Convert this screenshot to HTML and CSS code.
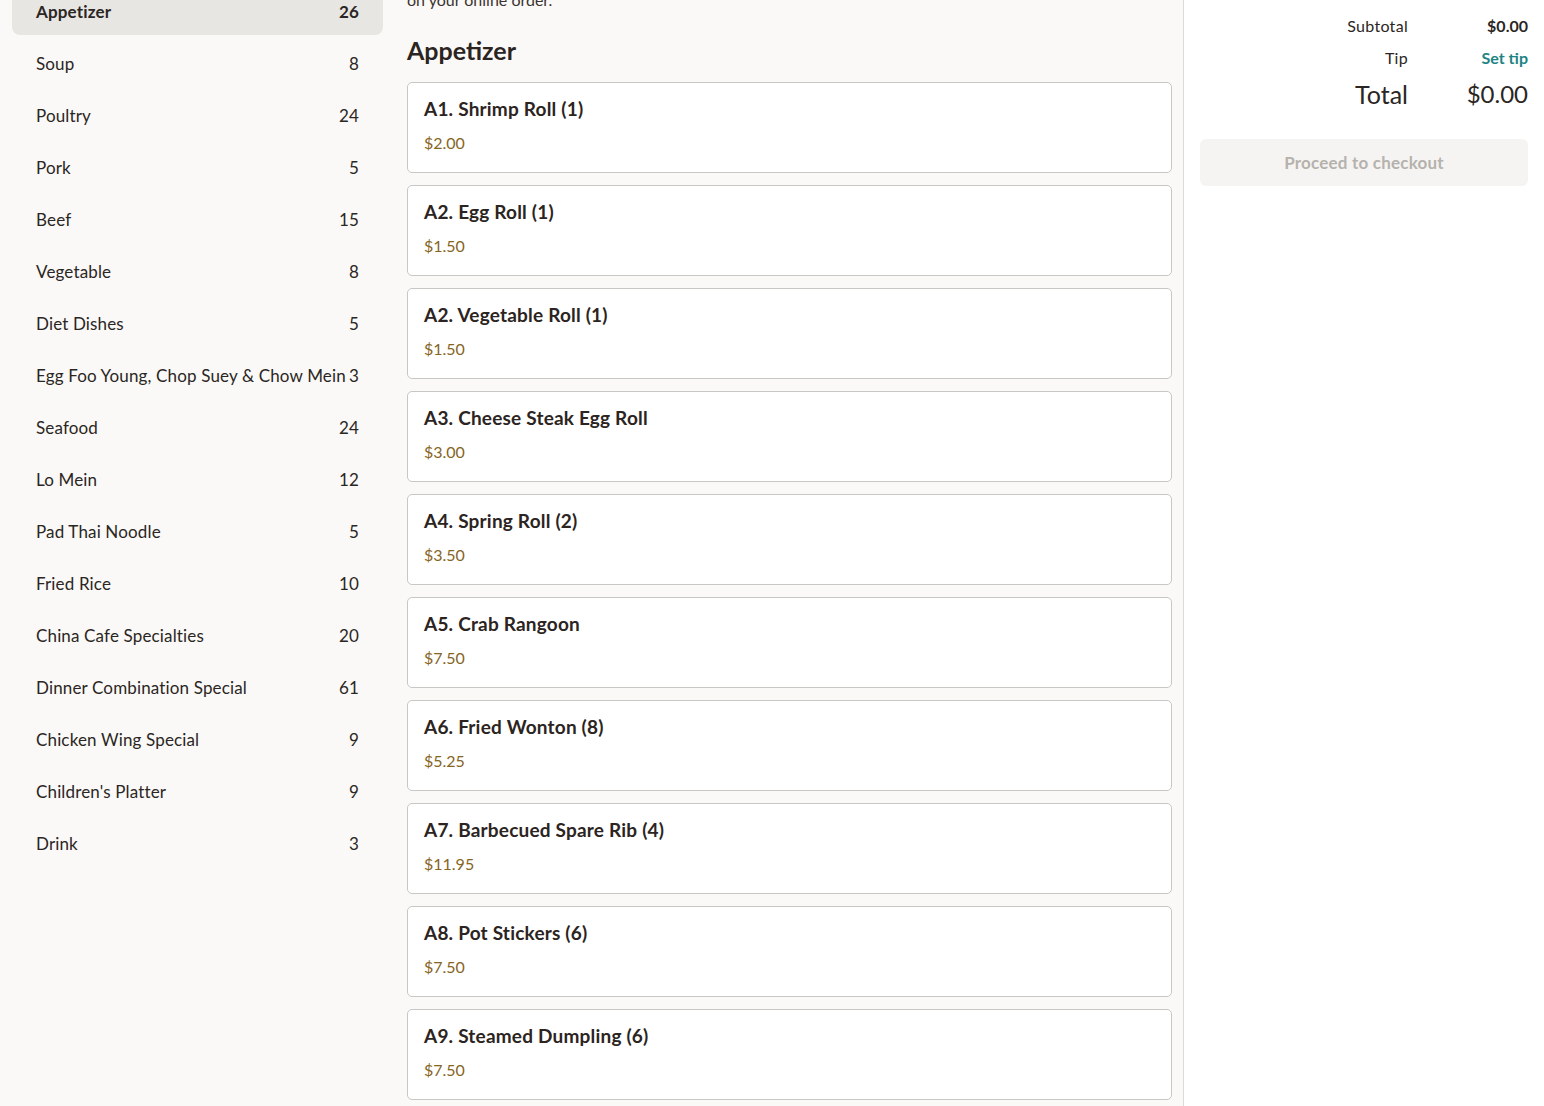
FILE: index.html
```html
<!DOCTYPE html>
<html>
<head>
<meta charset="utf-8">
<link rel="stylesheet" href="styles.css">
</head>
<body>
<div class="page">
  <nav class="sidebar">
    <ul class="cats">
      <li class="cat active"><span>Appetizer</span><span>26</span></li>
      <li class="cat"><span>Soup</span><span>8</span></li>
      <li class="cat"><span>Poultry</span><span>24</span></li>
      <li class="cat"><span>Pork</span><span>5</span></li>
      <li class="cat"><span>Beef</span><span>15</span></li>
      <li class="cat"><span>Vegetable</span><span>8</span></li>
      <li class="cat"><span>Diet Dishes</span><span>5</span></li>
      <li class="cat"><span>Egg Foo Young, Chop Suey &amp; Chow Mein</span><span>3</span></li>
      <li class="cat"><span>Seafood</span><span>24</span></li>
      <li class="cat"><span>Lo Mein</span><span>12</span></li>
      <li class="cat"><span>Pad Thai Noodle</span><span>5</span></li>
      <li class="cat"><span>Fried Rice</span><span>10</span></li>
      <li class="cat"><span>China Cafe Specialties</span><span>20</span></li>
      <li class="cat"><span>Dinner Combination Special</span><span>61</span></li>
      <li class="cat"><span>Chicken Wing Special</span><span>9</span></li>
      <li class="cat"><span>Children's Platter</span><span>9</span></li>
      <li class="cat"><span>Drink</span><span>3</span></li>
    </ul>
  </nav>
  <main class="menu">
    <p class="intro">on your online order.</p>
    <h2 class="section-title">Appetizer</h2>
    <div class="items">
      <div class="item"><div class="item-name">A1. Shrimp Roll (1)</div><div class="item-price">$2.00</div></div>
      <div class="item"><div class="item-name">A2. Egg Roll (1)</div><div class="item-price">$1.50</div></div>
      <div class="item"><div class="item-name">A2. Vegetable Roll (1)</div><div class="item-price">$1.50</div></div>
      <div class="item"><div class="item-name">A3. Cheese Steak Egg Roll</div><div class="item-price">$3.00</div></div>
      <div class="item"><div class="item-name">A4. Spring Roll (2)</div><div class="item-price">$3.50</div></div>
      <div class="item"><div class="item-name">A5. Crab Rangoon</div><div class="item-price">$7.50</div></div>
      <div class="item"><div class="item-name">A6. Fried Wonton (8)</div><div class="item-price">$5.25</div></div>
      <div class="item"><div class="item-name">A7. Barbecued Spare Rib (4)</div><div class="item-price">$11.95</div></div>
      <div class="item"><div class="item-name">A8. Pot Stickers (6)</div><div class="item-price">$7.50</div></div>
      <div class="item"><div class="item-name">A9. Steamed Dumpling (6)</div><div class="item-price">$7.50</div></div>
    </div>
  </main>
  <aside class="cart">
    <div class="totals">
      <span class="label">Subtotal</span><span class="value strong">$0.00</span>
      <span class="label">Tip</span><span class="value tip">Set tip</span>
      <span class="label big">Total</span><span class="value big num">$0.00</span>
    </div>
    <button class="checkout" disabled>Proceed to checkout</button>
  </aside>
</div>
</body>
</html>
```
FILE: styles.css
```css
html, body {
  margin: 0;
  padding: 0;
  height: 100%;
  overflow: hidden;
}
body {
  font-family: "Lato", "Noto Sans", sans-serif;
  color: #2b2623;
  background: #faf9f7;
}
.page {
  display: grid;
  grid-template-columns: 395px 789px 360px;
  height: 1106px;
}
.sidebar {
  padding: 0 12px;
}
.cats {
  list-style: none;
  margin: -13px 0 0;
  padding: 0;
  display: flex;
  flex-direction: column;
  gap: 4px;
}
.cat {
  height: 48px;
  display: flex;
  align-items: center;
  justify-content: space-between;
  padding: 0 24px;
  font-size: 17px;
  letter-spacing: 0.15px;
  border-radius: 8px;
  white-space: nowrap;
}
.cat.active {
  background: #e8e6e3;
  font-weight: 700;
}
.menu {
  padding: 0 11px 0 12px;
  border-right: 1px solid #dcdad6;
}
.intro {
  margin: -12px 0 0;
  font-size: 16px;
  line-height: 24px;
  color: #3a3430;
}
.section-title {
  margin: 22px 0 16px;
  font-size: 25px;
  line-height: 32px;
  font-weight: 700;
  color: #2b2421;
}
.items {
  display: flex;
  flex-direction: column;
  gap: 12px;
}
.item {
  background: #fff;
  border: 1px solid #c9c7c4;
  border-radius: 5px;
  padding: 14px 16px 17px;
}
.item-name {
  font-size: 19px;
  letter-spacing: 0.2px;
  line-height: 24px;
  font-weight: 700;
  color: #2b2421;
}
.item-price {
  margin-top: 10px;
  font-size: 16px;
  line-height: 24px;
  color: #86651f;
}
.cart {
  background: #fff;
  padding: 15px 16px;
}
.totals {
  display: grid;
  grid-template-columns: 1fr 120px;
  text-align: right;
  row-gap: 10px;
  font-size: 16px;
  line-height: 22px;
}
.label {
  color: #2b2623;
  letter-spacing: 0.3px;
}
.value.strong {
  font-weight: 700;
}
.value.tip {
  font-weight: 700;
  color: #1d8383;
}
.big {
  font-size: 25px;
  line-height: 32px;
  margin-top: -1px;
  letter-spacing: 0;
}
.big.num {
  font-size: 24px;
}
.checkout {
  margin-top: 29px;
  width: 100%;
  height: 47px;
  border: none;
  border-radius: 6px;
  background: #f5f4f2;
  color: #b5b2ad;
  font-family: inherit;
  font-size: 17px;
  letter-spacing: 0.2px;
  font-weight: 700;
}
```
